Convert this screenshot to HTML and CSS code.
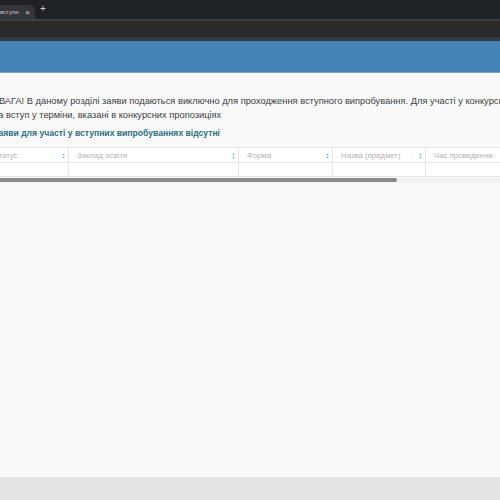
FILE: index.html
```html
<!DOCTYPE html>
<html lang="uk">
<head>
<meta charset="utf-8">
<link rel="stylesheet" href="styles.css">
</head>
<body>
<div class="chrome">
  <div class="tabbar">
    <div class="tab"><span class="tab-title">вступн</span><span class="tab-close">×</span></div>
    <span class="tab-new">+</span>
  </div>
  <div class="sep"></div>
  <div class="toolbar"></div>
  <div class="sep2"></div>
</div>
<div class="header"></div>
<main class="page">
  <div class="content">
    <p class="notice">УВАГА! В даному розділі заяви подаються виключно для проходження вступного випробування. Для участі у конкурсному відборі подавайте заяви<br>на вступ у терміни, вказані в конкурсних пропозиціях</p>
    <p class="empty">Заяви для участі у вступних випробуваннях відсутні</p>
  </div>
  <div class="table-wrap">
    <table class="grid">
      <thead>
        <tr>
          <th class="c1"><span>Статус</span><svg class="sort" viewBox="0 0 4 8"><path d="M2 0.5L3.6 3H0.4Z M2 7.5L0.4 5H3.6Z"/></svg></th>
          <th class="c2"><span>Заклад освіти</span><svg class="sort" viewBox="0 0 4 8"><path d="M2 0.5L3.6 3H0.4Z M2 7.5L0.4 5H3.6Z"/></svg></th>
          <th class="c3"><span>Форма</span><svg class="sort" viewBox="0 0 4 8"><path d="M2 0.5L3.6 3H0.4Z M2 7.5L0.4 5H3.6Z"/></svg></th>
          <th class="c4"><span>Назва (предмет)</span><svg class="sort" viewBox="0 0 4 8"><path d="M2 0.5L3.6 3H0.4Z M2 7.5L0.4 5H3.6Z"/></svg></th>
          <th class="c5"><span>Час проведення</span></th>
        </tr>
      </thead>
      <tbody>
        <tr><td></td><td></td><td></td><td></td><td></td></tr>
      </tbody>
    </table>
    <div class="hscroll"><div class="thumb"></div></div>
  </div>
</main>
<div class="bottom"></div>
</body>
</html>
```
FILE: styles.css
```css
html, body {
  margin: 0;
  padding: 0;
  width: 500px;
  height: 500px;
  overflow: hidden;
  background: #f9f9f9;
  font-family: "Liberation Sans", Arial, sans-serif;
}
.chrome { background: #202124; }
.tabbar {
  height: 19px;
  display: flex;
  align-items: flex-end;
  gap: 5px;
}
.tab {
  width: 35px;
  height: 14px;
  background: #35363a;
  border-radius: 0 5px 0 0;
  display: flex;
  align-items: center;
  justify-content: space-between;
  padding: 0 5px 0 0;
  box-sizing: border-box;
  color: #c8c8c8;
  font-size: 6px;
  overflow: hidden;
}
.tab-title { white-space: nowrap; }
.tab-close { font-size: 8px; color: #ddd; }
.tab-new {
  color: #d0d0d0;
  font-size: 10px;
  line-height: 14px;
  height: 14px;
  padding-bottom: 3px;
}
.sep { height: 2px; background: #3d3e41; }
.toolbar { height: 16px; background: #2a2a2c; }
.sep2 { height: 4px; background: #383641; }
.header {
  height: 31px;
  background: #4582b5;
  border-bottom: 1px solid #7aa2cc;
}
.page {
  background: #f9f9f9;
  height: 404px;
  padding-top: 21px;
  box-sizing: border-box;
}
.content { margin-left: -7px; }
.notice {
  margin: 0;
  font-size: 9.3px;
  line-height: 14px;
  color: #3d3d3d;
  white-space: nowrap;
}
.empty {
  margin: 5px 0 0;
  font-size: 8.6px;
  font-weight: bold;
  color: #2e6f82;
  line-height: 12px;
}
.table-wrap {
  margin-top: 8px;
  margin-left: -16px;
  width: 530px;
}
.grid {
  border-collapse: collapse;
  background: #fff;
  table-layout: fixed;
  width: 530px;
}
.grid th, .grid td {
  border: 1px solid #e6e6e6;
  padding: 0 3px 0 8px;
  box-sizing: border-box;
}
.grid th {
  height: 15px;
  font-weight: normal;
  font-size: 7.8px;
  color: #b3b3b3;
  text-align: left;
  white-space: nowrap;
}
.grid th span { display: inline-block; vertical-align: middle; }
.grid td { height: 14px; border-top: none; }
.c1 { width: 84px; }
.c2 { width: 170px; }
.c3 { width: 94px; }
.c4 { width: 93px; }
.c5 { width: 89px; }
.sort {
  float: right;
  width: 3px;
  height: 6px;
  margin-top: 3px;
  fill: #7fa7b8;
}
.hscroll {
  height: 5px;
  background: #f0f0f0;
  margin-top: 1px;
}
.thumb {
  width: 413px;
  height: 4px;
  background: #8a8a8a;
  border-radius: 0 2px 2px 0;
}
.bottom {
  height: 23px;
  background: #e3e3e3;
}
```
